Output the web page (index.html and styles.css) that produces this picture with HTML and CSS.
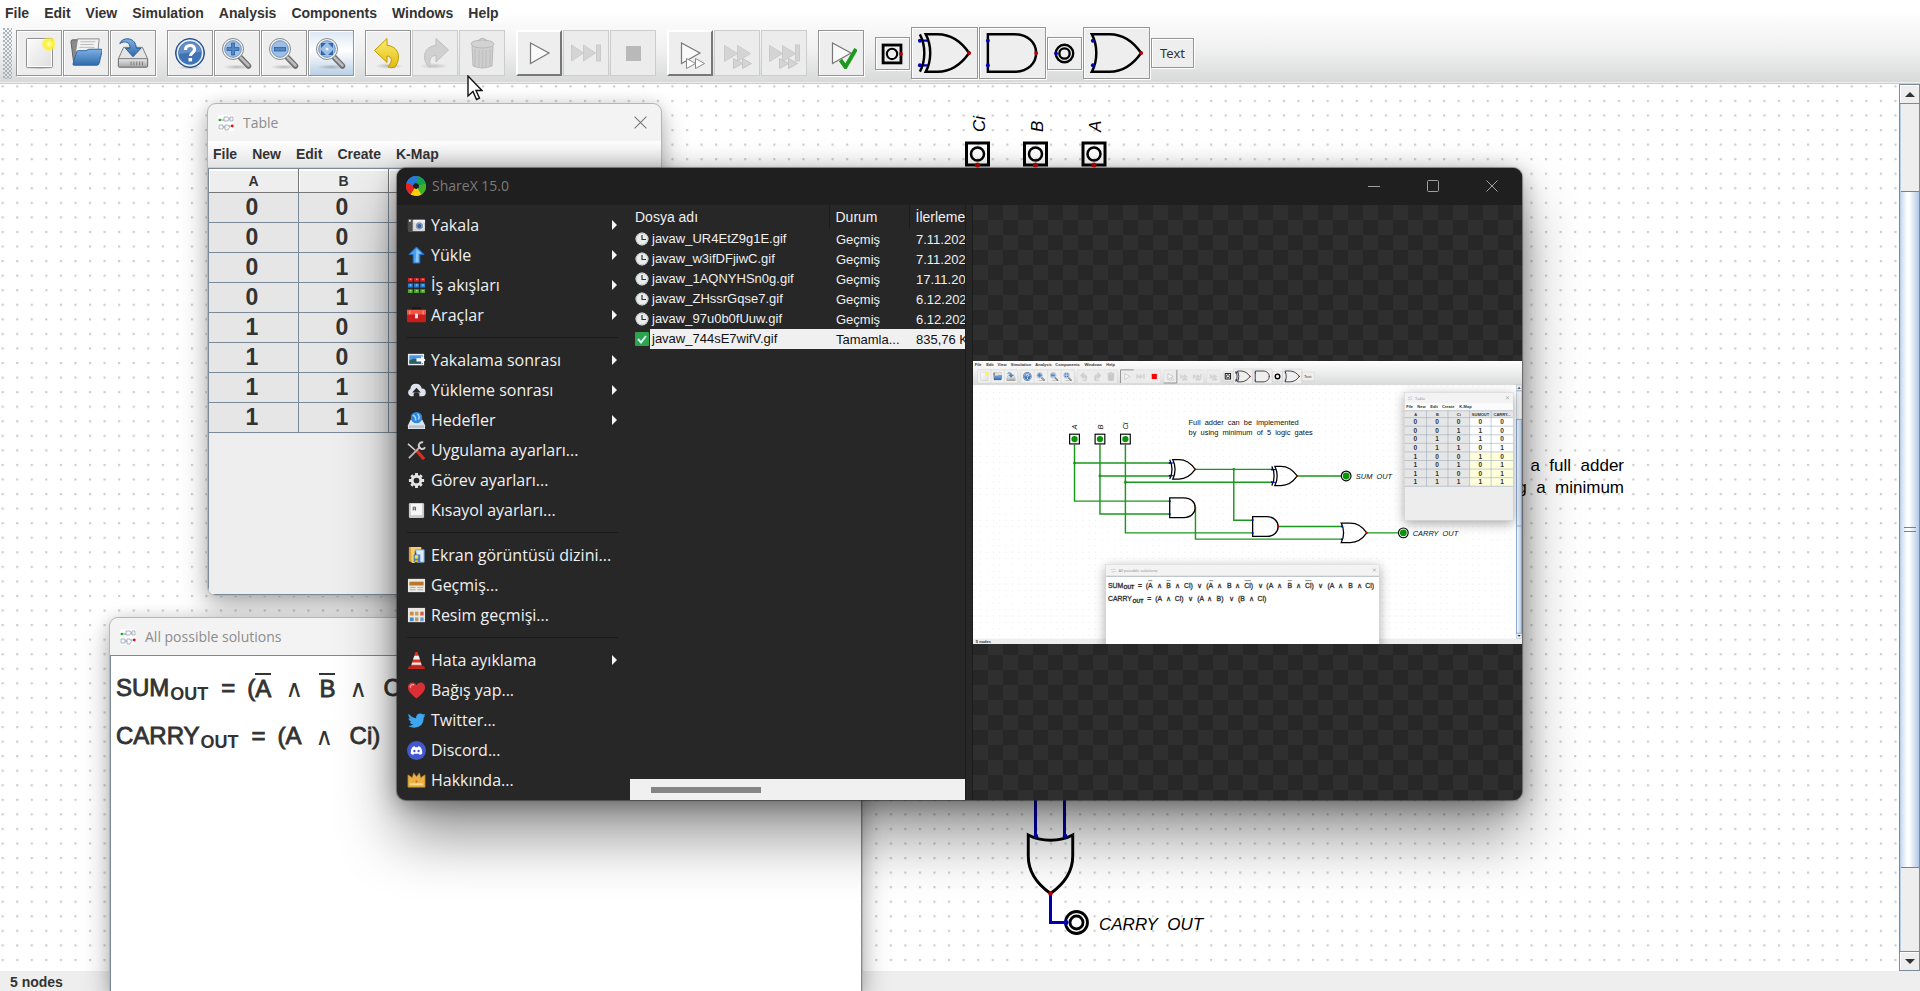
FILE: index.html
```
<!DOCTYPE html>
<html lang="tr">
<head>
<meta charset="utf-8">
<title>Digital</title>
<link rel="stylesheet" href="styles.css">
</head>
<body>
<svg class="sprite" width="0" height="0" aria-hidden="true">
  <defs>
    <linearGradient id="g-blue" x1="0" y1="0" x2="0" y2="1"><stop offset="0" stop-color="#7fb0e2"/><stop offset="1" stop-color="#2f69ad"/></linearGradient>
    <linearGradient id="g-paper" x1="0" y1="0" x2="1" y2="1"><stop offset="0" stop-color="#fdfdfd"/><stop offset="1" stop-color="#dedede"/></linearGradient>
    <linearGradient id="g-metal" x1="0" y1="0" x2="0" y2="1"><stop offset="0" stop-color="#e8e8e8"/><stop offset="1" stop-color="#a5a5a5"/></linearGradient>
    <linearGradient id="g-gold" x1="0" y1="0" x2="0" y2="1"><stop offset="0" stop-color="#fbee6e"/><stop offset="1" stop-color="#e2bb10"/></linearGradient>
    <radialGradient id="g-star"><stop offset="0" stop-color="#ffffc0"/><stop offset=".55" stop-color="#fdf02c"/><stop offset="1" stop-color="#fdf02c" stop-opacity="0"/></radialGradient>
    <radialGradient id="g-shade"><stop offset="0" stop-color="#000" stop-opacity=".22"/><stop offset="1" stop-color="#000" stop-opacity="0"/></radialGradient>
    <linearGradient id="g-bar" x1="0" y1="0" x2="0" y2="1"><stop offset="0" stop-color="#fff"/><stop offset="1" stop-color="#d9dada"/></linearGradient>
    <linearGradient id="g-thumb" x1="0" y1="0" x2="1" y2="0"><stop offset="0" stop-color="#fff"/><stop offset="1" stop-color="#a9c5e4"/></linearGradient>
    <pattern id="dots" width="20" height="20" patternUnits="userSpaceOnUse" x="2.2" y="1.8"><rect width="3" height="3" fill="#cdcdcd"/></pattern>

    <symbol id="i-new" viewBox="0 0 32 32"><ellipse cx="16" cy="31" rx="15" ry="2" fill="url(#g-shade)"/><rect x="3.5" y="1.5" width="26" height="29" rx="1" fill="url(#g-paper)" stroke="#8f8f8f"/><rect x="4.5" y="2.5" width="24" height="27" fill="none" stroke="#fff"/><circle cx="26" cy="7" r="8" fill="url(#g-star)"/></symbol>
    <symbol id="i-open" viewBox="0 0 34 32"><path d="M1 4 q0-2 2-2 h6 l2 3 h17 v22 H4z" fill="#8b8b88" stroke="#5c5c5c"/><path d="M8 1 h23 l-2 20 H5z" fill="#f2f2f2" stroke="#868686"/><path d="M11 4h16M11 7h14M10 10h16" stroke="#b9b9b9"/><path d="M7 15 q0-1.500 2-1.500 h8 l3-1.500 h13 q1.500 0 1.200 1.500 L31 27 q-.5 2-2.500 2 H4 q-1 0-.8-1.500z" fill="url(#g-blue)" stroke="#2b62a4"/></symbol>
    <symbol id="i-save" viewBox="0 0 34 32"><path d="M7 10 h20 l5.500 12 v8 q0 1-1 1 H2.500 q-1 0-1-1 v-8z" fill="#e4e4e2" stroke="#747474"/><path d="M1.500 22 h31 v8 q0 1-1 1 H2.500 q-1 0-1-1z" fill="url(#g-metal)" stroke="#747474"/><path d="M15 25v4M18 25v4M21 25v4M24 25v4M27 25v4" stroke="#777"/><path d="M3 6 C5-1 20-2 20.500 11 h5 L17 20 9 11 h5 C14 5 9 2 3 6z" fill="url(#g-blue)" stroke="#23578f"/></symbol>
    <symbol id="i-help" viewBox="0 0 32 32"><ellipse cx="16" cy="30.500" rx="13" ry="2" fill="url(#g-shade)"/><circle cx="16" cy="16" r="14.500" fill="#3465a4" stroke="#204a87"/><circle cx="16" cy="16" r="12.600" fill="#3f73b5" stroke="#e7eef7" stroke-width="1.600"/><path d="M5 17a11 11 0 0 1 22-2q-11 0-22 2z" fill="#fff" opacity=".2"/><path d="M11.500 13 q0-4.500 4.500-4.500 t4.500 4 q0 2-2.200 3.500 -1.800 1.200-1.800 3" fill="none" stroke="#fff" stroke-width="3.200"/><rect x="14.500" y="21" width="3.600" height="3.400" fill="#fff"/></symbol>
    <g id="lens"><ellipse cx="16" cy="30" rx="14" ry="2.500" fill="url(#g-shade)"/><path d="M18.500 19.500l9 9.500" stroke="#6e6e6e" stroke-width="5.500" stroke-linecap="round"/><path d="M19.500 20.500l8 8" stroke="#bdbdbd" stroke-width="2.500" stroke-linecap="round"/><circle cx="12" cy="12" r="10.500" fill="#f4f4f2" stroke="#8a8c88"/><circle cx="12" cy="12" r="8.300" fill="#9dbfe6" stroke="#6f95c3"/></g>
    <symbol id="i-zin" viewBox="0 0 32 32"><use href="#lens"/><path d="M10.500 6h3v4.500H18v3h-4.500V18h-3v-4.500H6v-3h4.500z" fill="#5285c2" stroke="#2f5f9f" stroke-width=".8"/></symbol>
    <symbol id="i-zout" viewBox="0 0 32 32"><use href="#lens"/><rect x="6.500" y="10.500" width="11" height="3.500" fill="#5285c2" stroke="#2f5f9f" stroke-width=".8"/></symbol>
    <symbol id="i-zfit" viewBox="0 0 32 32"><use href="#lens"/><path d="M6 11V6h5zM18 11V6h-5zM6 13v5h5zM18 13v5h-5z" fill="#2f66ac"/><circle cx="12" cy="12" r="1.500" fill="#eef4fb"/></symbol>
    <symbol id="i-undo" viewBox="0 0 32 32"><ellipse cx="17" cy="29" rx="14" ry="3" fill="url(#g-shade)"/><path d="M2.500 13.500 L15 1.500 v7 C26 9 30 20 23 30 q-3 1.500-7 0 C21 24 20 19.500 15 19 v6.500z" fill="url(#g-gold)" stroke="#bd9805"/></symbol>
    <symbol id="i-redo" viewBox="0 0 32 32"><ellipse cx="15" cy="29" rx="14" ry="3" fill="url(#g-shade)"/><path d="M29.500 13 L17 1.500 v7 C6 9 2 20 9 29 q1 1 3 1 C9 24 12 18 17 18.500 V25z" fill="#c8cac8" stroke="#b4b4b4"/></symbol>
    <symbol id="i-trash" viewBox="0 0 32 32"><path d="M6 9h21l-1 20q-9.500 4-19 0z" fill="#c8c8c8" stroke="#adadad"/><path d="M9 12v17M13 13v17M16.500 13v18M20 13v17M24 12v17" stroke="#b8b8b8" stroke-width="1.500"/><ellipse cx="16.500" cy="7" rx="11.500" ry="4" fill="#cdcdcd" stroke="#adadad"/><path d="M12.500 4q4-5 8 0" fill="none" stroke="#adadad" stroke-width="1.500"/></symbol>
    <symbol id="i-play" viewBox="0 0 32 32"><path d="M7.500 6v20.500L26 16z" fill="#fafafa" stroke="#777" stroke-width="1.200"/></symbol>
    <symbol id="i-ff" viewBox="0 0 32 32"><path d="M1.500 8v16l12-8zM13.500 8v16l12-8z" fill="#cfcfcf" stroke="#c2c2c2"/><rect x="26.500" y="8" width="4" height="16" fill="#cfcfcf" stroke="#c2c2c2"/></symbol>
    <symbol id="i-stop" viewBox="0 0 32 32"><rect x="9" y="9" width="15" height="15" fill="#adadad"/></symbol>
    <symbol id="i-step" viewBox="0 0 32 32"><path d="M7.500 6v20.500L26 16z" fill="#fafafa" stroke="#777" stroke-width="1.200"/><path d="M12.500 21.500v10l9-5zM21.500 21.500v10l9-5z" fill="#fff" stroke="#888"/></symbol>
    <symbol id="i-fast" viewBox="0 0 32 32"><path d="M3.500 8.500v16l13-8zM16.500 8.500v16l13-8z" fill="#cfcfcf" stroke="#c2c2c2"/><path d="M12.500 21.500v10l9-5zM21.500 21.500v10l9-5z" fill="#cfcfcf" stroke="#bbb"/></symbol>
    <symbol id="i-faste" viewBox="0 0 32 32"><path d="M1.500 8.500v16l13-8zM14.500 8.500v16l13-8z" fill="#cfcfcf" stroke="#c2c2c2"/><rect x="27.500" y="8" width="4" height="16" fill="#cfcfcf" stroke="#c2c2c2"/><path d="M11.500 21.500v10l9-5zM20.500 21.500v10l9-5z" fill="#cfcfcf" stroke="#bbb"/></symbol>
    <symbol id="i-check" viewBox="0 0 32 32"><path d="M7.500 6v20.500L26 16z" fill="#fafafa" stroke="#777" stroke-width="1.200"/><path d="M15.500 23l5 7L31 12" fill="none" stroke="#1d9a1d" stroke-width="4"/></symbol>

    <g id="c-and"><path d="M0-19H27C41-19 49-10 49 0S41 19 27 19H0Z" fill="none" stroke="#000" stroke-width="2.500"/><circle cy="-12.500" r="2" fill="#00b"/><circle cy="12.500" r="2" fill="#00b"/><circle cx="49" r="2" fill="#b00"/></g>
    <g id="c-or"><path d="M0-19H18C32-19 43-10 50 0C43 10 32 19 18 19H0C6 8 6-8 0-19Z" fill="none" stroke="#000" stroke-width="2.500"/><circle cx="1" cy="-12.500" r="2" fill="#00b"/><circle cx="1" cy="12.500" r="2" fill="#00b"/><circle cx="50" r="2" fill="#b00"/></g>
    <g id="c-xor"><path d="M0-12.500H8M0 12.500H8" stroke="#00b" stroke-width="2.200"/><path d="M6-19H18C32-19 43-10 50 0C43 10 32 19 18 19H6C12 8 12-8 6-19ZM0-19C6-8 6 8 0 19" fill="none" stroke="#000" stroke-width="2.500"/><circle cy="-12.500" r="2" fill="#00b"/><circle cy="12.500" r="2" fill="#00b"/><circle cx="50" r="2" fill="#b00"/></g>

    <symbol id="i-digital" viewBox="0 0 16 16"><rect width="16" height="16" fill="#fff"/><path d="M6 2h4q2 1.500 0 4H6zM12 2h3v4h-3zM1 10h4v4H1zM7 10h3q3 2 0 5H7z" fill="#f6f8fc" stroke="#a4aab8" stroke-width=".9"/><path d="M2 5h4M12 4h-1M5 12h2M11 11h3" stroke="#8a96b4"/><circle cx="1.800" cy="5" r="1.300" fill="#12b012"/><circle cx="14.300" cy="11" r="1.400" fill="#e01010"/></symbol>
    <symbol id="i-close" viewBox="0 0 12 12"><path d="M.5.5l11 11M11.500.5l-11 11" stroke="currentColor" fill="none"/></symbol>

    <symbol id="s-logo" viewBox="0 0 20 20"><circle cx="10" cy="10" r="6.500" fill="none" stroke="#2f8fe8" stroke-width="7"/><g fill="none" stroke-width="7"><path d="M10 3.500a6.500 6.500 0 0 1 6.500 6.500" stroke="#13a24b"/><path d="M16.500 8.500a6.500 6.500 0 0 1-5.500 8" stroke="#43b02a"/><path d="M13.500 15.500a6.500 6.500 0 0 1-8-1" stroke="#fdd00c"/><path d="M6.500 15.500a6.500 6.500 0 0 1-2.800-7.500" stroke="#e9231b"/><path d="M3.800 8A6.500 6.500 0 0 1 11 3.600" stroke="#2977d6"/></g></symbol>
    <symbol id="s-camera" viewBox="0 0 20 20"><rect x="1" y="4" width="18" height="12" rx="1" fill="#d3d3d3"/><rect x="1" y="3" width="5" height="13" fill="#4b4b4b"/><rect x="2" y="4" width="2" height="2" fill="#eee"/><rect x="7" y="4" width="12" height="3" fill="#f0f0f0"/><circle cx="13" cy="10.500" r="4.500" fill="#8a98b0" stroke="#f4f4f4"/><circle cx="13" cy="10.500" r="2" fill="#2f5fa8"/></symbol>
    <symbol id="s-up" viewBox="0 0 20 20"><path d="M10 1l8 8h-4.500v9h-7V9H2z" fill="#4aa0ee" stroke="#1f6fc4"/><path d="M10 3l5 5h-3v9H9z" fill="#8cc7fa"/></symbol>
    <symbol id="s-grid" viewBox="0 0 20 20"><path d="M1 2h5v4H1zM7.500 2h5v4h-5zM14 2h5v4h-5z" fill="#d3242b"/><path d="M1 8h5v4H1zM7.500 8h5v4h-5zM14 8h5v4h-5z" fill="#2a82d8"/><path d="M1 14h5v4H1zM7.500 14h5v4h-5zM14 14h5v4h-5z" fill="#4faa28"/><path d="M3 3.500h1.500M9.500 3.500H11M16 3.500h1.500M3 9.500h1.500M9.500 9.500H11M16 9.500h1.500M3 15.500h1.500M9.500 15.500H11M16 15.500h1.500" stroke="#fff" opacity=".8"/></symbol>
    <symbol id="s-box" viewBox="0 0 20 20"><path d="M6 5V2.500h8V5" fill="none" stroke="#151515" stroke-width="2"/><rect x="0" y="4" width="20" height="13" rx="1" fill="#c91c1c"/><rect x="0" y="4" width="20" height="5" fill="#ef5545"/><path d="M3 5v4M17 5v4" stroke="#f7a79c"/><rect x="8.500" y="8" width="3" height="5" fill="#e8e8e8"/></symbol>
    <symbol id="s-after" viewBox="0 0 20 20"><rect x="1" y="3" width="17" height="12" fill="#e9eef4"/><rect x="2.500" y="4.500" width="14" height="9" fill="#4c95e0"/><path d="M2.500 10l5-2 9 3v2.500h-14z" fill="#2f5d60"/><path d="M10 7.500h5V5l4.500 4.500L15 14v-3h-5z" fill="#fff"/></symbol>
    <symbol id="s-cloud" viewBox="0 0 20 20"><path d="M4 16a4 4 0 0 1-.5-7.500Q4 3 9.500 3q5 0 6 5A4 4 0 0 1 16 16h-3v-3H7v3z" fill="#dfe3ee"/><path d="M10 7l4.500 5H5.500z" fill="#272727"/><path d="M10 18v-6" stroke="#272727" stroke-width="4"/></symbol>
    <symbol id="s-target" viewBox="0 0 20 20"><path d="M4 9h12l3 6v4H1v-4z" fill="#e2e6ea"/><path d="M2 15h16v3H2z" fill="#b6c4d2"/><circle cx="10" cy="7" r="6" fill="#3088dc"/><path d="M6 4q4 2 3 6M11 3q3 3 1 6" stroke="#a5d8ff" fill="none" stroke-width="1.500"/></symbol>
    <symbol id="s-tools" viewBox="0 0 20 20"><path d="M1 3l8 7" stroke="#d8d8d8" stroke-width="1.500"/><path d="M10 10l7 8" stroke="#d62e22" stroke-width="3.500" stroke-linecap="round"/><path d="M2 18L14 6" stroke="#b9b9b9" stroke-width="2"/><path d="M17 1.500a3.500 3.500 0 1 0 2 5" fill="none" stroke="#cfcfcf" stroke-width="2"/></symbol>
    <symbol id="s-gear" viewBox="0 0 20 20"><circle cx="10" cy="10" r="4.500" fill="none" stroke="#e4e4e4" stroke-width="3"/><g stroke="#e4e4e4" stroke-width="3"><path d="M10 2v3M10 15v3M2 10h3M15 10h3M4.500 4.500l2 2M13.500 13.500l2 2M15.500 4.500l-2 2M6.500 13.500l-2 2"/></g></symbol>
    <symbol id="s-key" viewBox="0 0 20 20"><rect x="2" y="2" width="16" height="16" rx="1.500" fill="#c9c9c9"/><rect x="4" y="3" width="12" height="12" fill="#f6f6f6"/><path d="M6.500 10V6.500h2.500V10M6.500 8.500H9" stroke="#555" fill="none"/></symbol>
    <symbol id="s-folder" viewBox="0 0 20 20"><path d="M2 1h6v17l-6-2z" fill="#d9a43c"/><path d="M4 1h11v4H8v13H5z" fill="#f3cf74"/><path d="M9 4h9v13h-7z" fill="#dcebfa" stroke="#6f9fd0"/><rect x="7" y="9" width="7" height="8" fill="#4a83c9"/><circle cx="10" cy="11.500" r="2" fill="#f6de3a"/><path d="M8 17q2-5 4 0z" fill="#e8b820"/></symbol>
    <symbol id="s-history" viewBox="0 0 20 20"><rect x="1" y="3" width="18" height="14" fill="#eceae4"/><rect x="2.500" y="6" width="15" height="4" fill="#b9762c"/><path d="M3 12h6M3 14.500h6M11 12h6M11 14.500h6" stroke="#aaa"/></symbol>
    <symbol id="s-images" viewBox="0 0 20 20"><rect x="1" y="2" width="18" height="15" fill="#e9e7e1"/><path d="M3 6h4v4H3z" fill="#d08a4a"/><path d="M8.500 6h3.500v4H8.500z" fill="#c99a50"/><path d="M14 6h3.500v4H14z" fill="#d25a4a"/><path d="M3 12h4v4H3z" fill="#4a8ac0"/><path d="M8.500 12h3.500v4H8.500z" fill="#b09a70"/><path d="M14 12h3.500v4H14z" fill="#6a9ad0"/></symbol>
    <symbol id="s-cone" viewBox="0 0 20 20"><path d="M9 1h2l5 15H4z" fill="#e23222"/><path d="M7.800 5h4.500l1.300 4H6.300z" fill="#f1f1f1"/><path d="M5.500 12h9l.8 2.500H4.700z" fill="#f1f1f1"/><path d="M2 16h16l1 3H1z" fill="#c7221b"/></symbol>
    <symbol id="s-heart" viewBox="0 0 20 20"><path d="M10 18.500C2 12 1 9 1 6.500 1 1 8 0 10 4.500 12 0 19 1 19 6.500c0 2.500-1 5.500-9 12z" fill="#dc2f35"/><path d="M3.500 7q0-4 4-3" stroke="#f79a9a" fill="none" stroke-width="1.500"/></symbol>
    <symbol id="s-bird" viewBox="0 0 20 20"><path d="M1.500 3q4 4.500 8 4.500Q9.500 2.500 14 2.500q2 0 3 1.200l2-.7-1 2 1.500-.3-1.800 2Q17.500 17 8 17.500q-4 0-6.500-1.700 3 0 5-1.500-3-.4-3.500-2.800h1.500Q1.500 10 1.500 7.500l1.600.4Q.8 6 1.500 3z" fill="#3ea6ee"/></symbol>
    <symbol id="s-discord" viewBox="0 0 20 20"><circle cx="10" cy="10" r="10" fill="#4357cf"/><path d="M4 13.500q-.3-5 2.200-7.500l2-.5.5 1h2.600l.5-1 2 .5q2.500 2.500 2.200 7.500l-2.500 1.300-.8-1.500H7.300l-.8 1.500z" fill="#fff"/><ellipse cx="7.800" cy="10.500" rx="1.200" ry="1.400" fill="#4357cf"/><ellipse cx="12.200" cy="10.500" rx="1.200" ry="1.400" fill="#4357cf"/></symbol>
    <symbol id="s-crown" viewBox="0 0 20 20"><path d="M1 4l4.500 3L7 2l3 4 3-4 1.500 5L19 4v13H1z" fill="#e8b14a" stroke="#b77f20" stroke-width=".8"/><path d="M3 14h14" stroke="#f7d98a" stroke-width="2"/><circle cx="10" cy="11" r="1" fill="#d0502a"/></symbol>
    <symbol id="s-clock" viewBox="0 0 14 14"><circle cx="7" cy="7" r="6.500" fill="#e9eded"/><circle cx="7" cy="7" r="5.800" fill="none" stroke="#c3c9cb"/><path d="M7 3v4.500h4" stroke="#333" fill="none" stroke-width="1.200"/></symbol>
    <symbol id="s-done" viewBox="0 0 14 14"><rect width="14" height="14" rx="1" fill="#2fa34c"/><path d="M3 7l3 3.500L11 4" fill="none" stroke="#d4efff" stroke-width="2"/></symbol>
  </defs>
</svg>

<header class="app-head">
  <nav class="menubar" aria-label="Main menu">
    <button>File</button><button>Edit</button><button>View</button><button>Simulation</button><button>Analysis</button><button>Components</button><button>Windows</button><button>Help</button>
  </nav>
  <div class="toolbar" role="toolbar">
    <span class="grip"></span>
    <div class="tools">
      <button class="tool" aria-label="New"><svg><use href="#i-new"/></svg></button>
      <button class="tool" aria-label="Open"><svg><use href="#i-open"/></svg></button>
      <button class="tool" aria-label="Save"><svg><use href="#i-save"/></svg></button>
    </div>
    <div class="tools">
      <button class="tool" aria-label="Help"><svg><use href="#i-help"/></svg></button>
      <button class="tool" aria-label="Zoom in"><svg><use href="#i-zin"/></svg></button>
      <button class="tool" aria-label="Zoom out"><svg><use href="#i-zout"/></svg></button>
      <button class="tool hover" aria-label="Fit"><svg><use href="#i-zfit"/></svg></button>
    </div>
    <div class="tools">
      <button class="tool" aria-label="Undo"><svg><use href="#i-undo"/></svg></button>
      <button class="tool off" disabled aria-label="Redo"><svg><use href="#i-redo"/></svg></button>
      <button class="tool off" disabled aria-label="Delete"><svg><use href="#i-trash"/></svg></button>
    </div>
    <div class="tools">
      <button class="tool raised" aria-label="Start"><svg><use href="#i-play"/></svg></button>
      <button class="tool off" disabled aria-label="Step"><svg><use href="#i-ff"/></svg></button>
      <button class="tool off" disabled aria-label="Stop"><svg><use href="#i-stop"/></svg></button>
    </div>
    <div class="tools">
      <button class="tool raised" aria-label="Start steps"><svg><use href="#i-step"/></svg></button>
      <button class="tool off" disabled aria-label="Fast run"><svg><use href="#i-fast"/></svg></button>
      <button class="tool off" disabled aria-label="Run to break"><svg><use href="#i-faste"/></svg></button>
    </div>
    <div class="tools">
      <button class="tool" aria-label="Run tests"><svg><use href="#i-check"/></svg></button>
    </div>
    <div class="tools">
      <button class="part pin" aria-label="Input"><svg viewBox="0 0 34 33"><rect x="7" y="7.500" width="19" height="19" fill="none" stroke="#000" stroke-width="3"/><circle cx="16.500" cy="17" r="5.500" fill="none" stroke="#000" stroke-width="2.200"/><circle cx="26" cy="17" r="2" fill="#b00"/></svg></button>
      <button class="part gate" aria-label="XOr"><svg viewBox="0 0 66 50"><use href="#c-xor" x="8" y="25"/></svg></button>
      <button class="part gate" aria-label="And"><svg viewBox="0 0 66 50"><use href="#c-and" x="8" y="25"/></svg></button>
      <button class="part pin" aria-label="Output"><svg viewBox="0 0 34 33"><circle cx="17" cy="16.500" r="9.300" fill="none" stroke="#000" stroke-width="2.500"/><circle cx="17" cy="16.500" r="5.500" fill="none" stroke="#000" stroke-width="2.500"/><circle cx="8" cy="16.500" r="2" fill="#00b"/></svg></button>
      <button class="part gate" aria-label="Or"><svg viewBox="0 0 66 50"><use href="#c-or" x="8" y="25"/></svg></button>
      <button class="part text">Text</button>
    </div>
  </div>
</header>

<main class="work">
  <svg class="circuit">
    <g transform="scale(.728)"><rect width="3000" height="2000" fill="url(#dots)"/></g>
    <g transform="translate(0 -84)">
      <g class="label">
        <text transform="translate(985 132) rotate(-90)">Ci</text>
        <text transform="translate(1043 132) rotate(-90)">B</text>
        <text transform="translate(1101 132) rotate(-90)">A</text>
        <text x="1099" y="930">CARRY&nbsp; OUT</text>
      </g>
      <g fill="none" stroke="#000" stroke-width="3">
        <rect x="966.500" y="143" width="22" height="22"/><circle cx="977.500" cy="154" r="6.500" stroke-width="2.500"/>
        <rect x="1024.500" y="143" width="22" height="22"/><circle cx="1035.500" cy="154" r="6.500" stroke-width="2.500"/>
        <rect x="1083" y="143" width="22" height="22"/><circle cx="1094" cy="154" r="6.500" stroke-width="2.500"/>
      </g>
      <g fill="#b00"><circle cx="977.500" cy="165" r="2.500"/><circle cx="1035.500" cy="165" r="2.500"/><circle cx="1094" cy="165" r="2.500"/></g>
      <path d="M1035.500 790V837M1064.500 790V837M1050.500 893V922.500H1066" fill="none" stroke="#00a" stroke-width="3"/>
      <use href="#c-or" transform="translate(1050.500 835) rotate(90) scale(1.170)"/>
      <circle cx="1076.500" cy="922.500" r="11" fill="none" stroke="#000" stroke-width="2.800"/><circle cx="1076.500" cy="922.500" r="6.500" fill="none" stroke="#000" stroke-width="2.800"/><circle cx="1066" cy="922.500" r="2.500" fill="#00b"/>
      <g class="note"><text x="1624" y="471">implementing&nbsp; a&nbsp; full&nbsp; adder</text><text x="1624" y="493">using&nbsp; a&nbsp; minimum</text></g>
    </g>
  </svg>
  <div class="vscroll">
    <button aria-label="Scroll up"><svg viewBox="0 0 10 5"><path d="M0 5L5 0l5 5z"/></svg></button>
    <div class="track"><div class="thumb"><i></i></div></div>
    <button aria-label="Scroll down"><svg viewBox="0 0 10 5"><path d="M0 0l5 5 5-5z"/></svg></button>
  </div>
</main>
<footer class="status">5 nodes</footer>

<section class="window table-win">
  <div class="caption"><svg><use href="#i-digital"/></svg><span>Table</span><button aria-label="Close"><svg><use href="#i-close"/></svg></button></div>
  <nav class="menubar small"><button>File</button><button>New</button><button>Edit</button><button>Create</button><button>K-Map</button></nav>
  <div class="truth-box">
    <table class="truth">
      <thead><tr><th>A</th><th>B</th><th></th></tr></thead>
      <tbody>
        <tr><td>0</td><td>0</td><td></td></tr>
        <tr><td>0</td><td>0</td><td></td></tr>
        <tr><td>0</td><td>1</td><td></td></tr>
        <tr><td>0</td><td>1</td><td></td></tr>
        <tr><td>1</td><td>0</td><td></td></tr>
        <tr><td>1</td><td>0</td><td></td></tr>
        <tr><td>1</td><td>1</td><td></td></tr>
        <tr><td>1</td><td>1</td><td></td></tr>
      </tbody>
    </table>
  </div>
</section>

<section class="window solutions">
  <div class="caption"><svg><use href="#i-digital"/></svg><span>All possible solutions</span></div>
  <div class="formulas">
    <p>SUM<sub>OUT</sub><b>=</b>(<i>A</i><em>∧</em><i>B</i><em>∧</em>Ci)</p>
    <p>CARRY<sub>OUT</sub><b>=</b>(A<em>∧</em>Ci)</p>
  </div>
</section>

<section class="sharex">
  <div class="titlebar">
    <svg class="logo"><use href="#s-logo"/></svg><h1>ShareX 15.0</h1>
    <button aria-label="Minimize"><svg viewBox="0 0 12 12"><path d="M0 6.500h12"/></svg></button>
    <button aria-label="Maximize"><svg viewBox="0 0 12 12"><rect x=".5" y=".5" width="11" height="11" rx="1"/></svg></button>
    <button aria-label="Close"><svg viewBox="0 0 12 12"><path d="M.5.5l11 11M11.500.5l-11 11"/></svg></button>
  </div>
  <div class="panes">
    <nav class="side">
      <button class="more"><svg><use href="#s-camera"/></svg>Yakala</button>
      <button class="more"><svg><use href="#s-up"/></svg>Yükle</button>
      <button class="more"><svg><use href="#s-grid"/></svg>İş akışları</button>
      <button class="more"><svg><use href="#s-box"/></svg>Araçlar</button>
      <hr>
      <button class="more"><svg><use href="#s-after"/></svg>Yakalama sonrası</button>
      <button class="more"><svg><use href="#s-cloud"/></svg>Yükleme sonrası</button>
      <button class="more"><svg><use href="#s-target"/></svg>Hedefler</button>
      <button><svg><use href="#s-tools"/></svg>Uygulama ayarları...</button>
      <button><svg><use href="#s-gear"/></svg>Görev ayarları...</button>
      <button><svg><use href="#s-key"/></svg>Kısayol ayarları...</button>
      <hr>
      <button><svg><use href="#s-folder"/></svg>Ekran görüntüsü dizini...</button>
      <button><svg><use href="#s-history"/></svg>Geçmiş...</button>
      <button><svg><use href="#s-images"/></svg>Resim geçmişi...</button>
      <hr>
      <button class="more"><svg><use href="#s-cone"/></svg>Hata ayıklama</button>
      <button><svg><use href="#s-heart"/></svg>Bağış yap...</button>
      <button><svg><use href="#s-bird"/></svg>Twitter...</button>
      <button><svg><use href="#s-discord"/></svg>Discord...</button>
      <button><svg><use href="#s-crown"/></svg>Hakkında...</button>
    </nav>
    <div class="list">
      <div class="list-view">
      <table class="tasks">
        <thead><tr><th>Dosya adı</th><th>Durum</th><th>İlerleme</th></tr></thead>
        <tbody>
          <tr><td><svg><use href="#s-clock"/></svg><span>javaw_UR4EtZ9g1E.gif</span></td><td>Geçmiş</td><td>7.11.2022</td></tr>
          <tr><td><svg><use href="#s-clock"/></svg><span>javaw_w3ifDFjiwC.gif</span></td><td>Geçmiş</td><td>7.11.2022</td></tr>
          <tr><td><svg><use href="#s-clock"/></svg><span>javaw_1AQNYHSn0g.gif</span></td><td>Geçmiş</td><td>17.11.2022</td></tr>
          <tr><td><svg><use href="#s-clock"/></svg><span>javaw_ZHssrGqse7.gif</span></td><td>Geçmiş</td><td>6.12.2022</td></tr>
          <tr><td><svg><use href="#s-clock"/></svg><span>javaw_97u0b0fUuw.gif</span></td><td>Geçmiş</td><td>6.12.2022</td></tr>
          <tr class="sel"><td><svg><use href="#s-done"/></svg><span>javaw_744sE7wifV.gif</span></td><td>Tamamla...</td><td>835,76 KiB</td></tr>
        </tbody>
      </table>
      </div>
      <div class="hscroll"><div class="hthumb"></div></div>
    </div>
    <div class="splitter"></div>
    <div class="preview">
      <svg class="shot" viewBox="0 0 1920 991">
        <rect width="1920" height="991" fill="#fff"/>
        <rect width="1920" height="84" fill="url(#g-bar)"/>
        <g class="mb"><text x="6" y="18">File</text><text x="46" y="18">Edit</text><text x="86" y="18">View</text><text x="132" y="18">Simulation</text><text x="218" y="18">Analysis</text><text x="288" y="18">Components</text><text x="390" y="18">Windows</text><text x="466" y="18">Help</text></g>
        <path d="M16 31h140v46H16zM167 31h187v46H167zM63 31v46M110 31v46M214 31v46M261 31v46M308 31v46" fill="#f0f0f0" stroke="#bbb"/>
        <path d="M365 31h140v46H365zM516 31h140v46H516zM667 31h140v46H667zM818 31h46v46H818z" fill="#ececec" stroke="#d4d4d4"/>
        <path d="M516 77V31h46M667 77h46V31" stroke="#888" stroke-width="3" fill="none"/>
        <use href="#i-new" x="23" y="38" width="32" height="32"/><use href="#i-open" x="70" y="38" width="32" height="32"/><use href="#i-save" x="117" y="38" width="32" height="32"/>
        <use href="#i-help" x="174" y="38" width="32" height="32"/><use href="#i-zin" x="221" y="38" width="32" height="32"/><use href="#i-zout" x="268" y="38" width="32" height="32"/><use href="#i-zfit" x="315" y="38" width="32" height="32"/>
        <g opacity=".8"><g transform="translate(404 38) scale(-1 1)"><use href="#i-redo" width="32" height="32"/></g><use href="#i-redo" x="419" y="38" width="32" height="32"/><use href="#i-trash" x="466" y="38" width="32" height="32"/><use href="#i-play" x="523" y="38" width="32" height="32"/><use href="#i-ff" x="570" y="38" width="32" height="32"/><use href="#i-step" x="674" y="38" width="32" height="32"/><use href="#i-fast" x="721" y="38" width="32" height="32"/><use href="#i-faste" x="768" y="38" width="32" height="32"/><use href="#i-fast" x="825" y="38" width="32" height="32"/></g>
        <rect x="625" y="45" width="18" height="18" fill="#f00"/>
        <path d="M875 37h35v33h-35zM911 28h67v52h-67zM979 28h67v52h-67zM1047 37h35v33h-35zM1083 28h67v52h-67zM1151 39h43v30h-43z" fill="#efefef" stroke="#bbb"/>
        <rect x="882" y="44" width="19" height="19" fill="none" stroke="#000" stroke-width="3"/><circle cx="891.500" cy="53.500" r="5.500" fill="none" stroke="#000" stroke-width="2.500"/>
        <use href="#c-xor" x="919" y="54"/><use href="#c-and" x="987" y="54"/><circle cx="1065" cy="54" r="8" fill="none" stroke="#000" stroke-width="5"/><use href="#c-or" x="1091" y="54"/>
        <text x="1158" y="59" font-size="14" fill="#333">Text</text>
        <g transform="translate(0 84) scale(1.117)"><rect width="1700" height="794" fill="url(#dots)" opacity=".45"/></g>
        <rect y="971" width="1920" height="20" fill="#eee"/><text class="b14" x="10" y="987">5 nodes</text>
        <rect x="1901" y="84" width="18" height="887" fill="#eee" stroke="#a9bdd2" stroke-width="2"/><rect x="1901" y="204" width="18" height="748" fill="url(#g-thumb)" stroke="#7f9fcb" stroke-width="3"/><path d="M1901 104h18M1901 577h18" stroke="#7f9fcb" stroke-width="3"/><path d="M1904 97l6-6 6 6zM1904 958l6 6 6-6z" fill="#333"/>

        <g fill="none" stroke="#18981c" stroke-width="5"><path d="M355 292V490H688M355 357H688M444 292V535H688M444 402H688M533 292V601H978M533 424H1045M778 379H1045M912 379V557H978M1134 402H1288M778 513V623H1288M1067 579H1288M1376 601H1488"/></g>
        <g fill="#18981c"><circle cx="355" cy="357" r="5"/><circle cx="444" cy="402" r="5"/><circle cx="533" cy="424" r="5"/><circle cx="912" cy="379" r="5"/></g>
        <use href="#c-xor" transform="translate(688 379) scale(1.780)"/><use href="#c-xor" transform="translate(1045 402) scale(1.780)"/><use href="#c-and" transform="translate(688 513) scale(1.820)"/><use href="#c-and" transform="translate(978 579) scale(1.820)"/><use href="#c-or" transform="translate(1288 601) scale(1.780)"/>
        <g fill="#fff" stroke="#000" stroke-width="4"><rect x="338" y="256" width="34" height="34"/><rect x="427" y="256" width="34" height="34"/><rect x="516" y="256" width="34" height="34"/><circle cx="1305" cy="402" r="17"/><circle cx="1505" cy="601" r="17"/></g>
        <g fill="#099409"><circle cx="355" cy="273" r="11"/><circle cx="444" cy="273" r="11"/><circle cx="533" cy="273" r="11"/><circle cx="1305" cy="402" r="12"/><circle cx="1505" cy="601" r="12"/></g>
        <g class="big"><text class="it" transform="translate(365 240) rotate(-90)">A</text><text class="it" transform="translate(454 240) rotate(-90)">B</text><text class="it" transform="translate(543 240) rotate(-90)">Ci</text><text x="754" y="224">Full&nbsp; adder&nbsp; can&nbsp; be&nbsp; implemented</text><text x="754" y="258">by&nbsp; using&nbsp; minimum&nbsp; of&nbsp; 5&nbsp; logic&nbsp; gates</text><text class="it" x="1339" y="414">SUM&nbsp; OUT</text><text class="it" x="1538" y="613">CARRY&nbsp; OUT</text></g>

        <g class="pop"><rect x="1509" y="110" width="380" height="448" fill="#ededed" stroke="#b8b8b8"/></g>
        <rect x="1510" y="111" width="378" height="36" fill="#f3f3f3"/><rect x="1510" y="147" width="378" height="26" fill="#fbfbfb"/>
        <use href="#i-digital" x="1521" y="122" width="16" height="16"/><text x="1546" y="136" class="cap">Table</text><path d="M1864 123l11 11M1875 123l-11 11" stroke="#888" stroke-width="2"/>
        <g class="mb"><text x="1515" y="165">File</text><text x="1554" y="165">New</text><text x="1599" y="165">Edit</text><text x="1640" y="165">Create</text><text x="1701" y="165">K-Map</text></g>
        <rect x="1510" y="174" width="378" height="264" fill="#e6e6e6"/><rect x="1737" y="198" width="151" height="120" fill="#fff"/><rect x="1737" y="318" width="151" height="120" fill="#ffffdc"/>
        <path d="M1510 174H1888M1510 198H1888M1510 228H1888M1510 258H1888M1510 288H1888M1510 318H1888M1510 348H1888M1510 378H1888M1510 408H1888M1510 438H1888M1586 174V438M1661 174V438M1737 174V438M1812 174V438" stroke="#9aa9b8" stroke-width="2"/>
        <g class="b14 mid"><text x="1548" y="192">A</text><text x="1624" y="192">B</text><text x="1699" y="192">Ci</text><text x="1775" y="192">SUMOUT</text><text x="1850" y="192">CARRY...</text></g>
        <g class="num mid">
          <text y="221"><tspan x="1547">0</tspan><tspan x="1623">0</tspan><tspan x="1698">0</tspan><tspan x="1774">0</tspan><tspan x="1850">0</tspan></text>
          <text y="251"><tspan x="1547">0</tspan><tspan x="1623">0</tspan><tspan x="1698">1</tspan><tspan x="1774">1</tspan><tspan x="1850">0</tspan></text>
          <text y="281"><tspan x="1547">0</tspan><tspan x="1623">1</tspan><tspan x="1698">0</tspan><tspan x="1774">1</tspan><tspan x="1850">0</tspan></text>
          <text y="311"><tspan x="1547">0</tspan><tspan x="1623">1</tspan><tspan x="1698">1</tspan><tspan x="1774">0</tspan><tspan x="1850">1</tspan></text>
          <text y="341"><tspan x="1547">1</tspan><tspan x="1623">0</tspan><tspan x="1698">0</tspan><tspan x="1774">1</tspan><tspan x="1850">0</tspan></text>
          <text y="371"><tspan x="1547">1</tspan><tspan x="1623">0</tspan><tspan x="1698">1</tspan><tspan x="1774">0</tspan><tspan x="1850">1</tspan></text>
          <text y="401"><tspan x="1547">1</tspan><tspan x="1623">1</tspan><tspan x="1698">0</tspan><tspan x="1774">0</tspan><tspan x="1850">1</tspan></text>
          <text y="431"><tspan x="1547">1</tspan><tspan x="1623">1</tspan><tspan x="1698">1</tspan><tspan x="1774">1</tspan><tspan x="1850">1</tspan></text>
        </g>

        <g class="pop"><rect x="464" y="712" width="957" height="300" fill="#fff" stroke="#b8b8b8"/></g>
        <rect x="465" y="713" width="955" height="40" fill="#f3f3f3"/><path d="M465 753H1420" stroke="#7a8a99" stroke-width="2"/>
        <use href="#i-digital" x="483" y="725" width="16" height="16"/><text x="509" y="738" class="cap">All possible solutions</text><path d="M1399 726l10 10M1409 726l-10 10" stroke="#888" stroke-width="2"/>
        <g class="eq">
          <text y="793"><tspan x="472">SUM</tspan><tspan x="526" dy="6" class="sub">OUT</tspan><tspan x="577" dy="-6">=</tspan><tspan x="604">(A</tspan><tspan x="643">∧</tspan><tspan x="676">B</tspan><tspan x="706">∧</tspan><tspan x="738">Ci)</tspan><tspan x="783">∨</tspan><tspan x="816">(A</tspan><tspan x="852">∧</tspan><tspan x="888">B</tspan><tspan x="916">∧</tspan><tspan x="949">Ci)</tspan><tspan x="996">∨</tspan><tspan x="1026">(A</tspan><tspan x="1063">∧</tspan><tspan x="1100">B</tspan><tspan x="1128">∧</tspan><tspan x="1161">Ci)</tspan><tspan x="1208">∨</tspan><tspan x="1240">(A</tspan><tspan x="1276">∧</tspan><tspan x="1312">B</tspan><tspan x="1342">∧</tspan><tspan x="1372">Ci)</tspan></text>
          <text y="841"><tspan x="472">CARRY</tspan><tspan x="558" dy="6" class="sub">OUT</tspan><tspan x="609" dy="-6">=</tspan><tspan x="637">(A</tspan><tspan x="674">∧</tspan><tspan x="706">Ci)</tspan><tspan x="752">∨</tspan><tspan x="784">(A</tspan><tspan x="820">∧</tspan><tspan x="852">B)</tspan><tspan x="896">∨</tspan><tspan x="927">(B</tspan><tspan x="964">∧</tspan><tspan x="995">Ci)</tspan></text>
          <path d="M613 768h14M677 768h14M826 768h14M950 768h22M1101 768h14M1162 768h22" stroke="#333" stroke-width="2"/>
        </g>
      </svg>
    </div>
  </div>
</section>

<svg class="cursor" viewBox="0 0 16 26"><path d="M1 1v20l5-4.500 3.500 8 3-1.300L9 15.500h6z" fill="#fff" stroke="#111" stroke-width="1.400"/></svg>
</body>
</html>
```
FILE: styles.css
```
* { box-sizing: border-box; }
html, body { height: 100%; }
body {
  margin: 0;
  position: relative;
  overflow: hidden;
  display: flex;
  flex-direction: column;
  background: #fff;
  color: #333;
  font: 14px "Liberation Sans", Arial, sans-serif;
}
button { margin: 0; padding: 0; border: 0; background: none; color: inherit; font: inherit; }
.sprite { position: absolute; }

/* application header */
.app-head {
  flex: none;
  padding-bottom: 2px;
  background: linear-gradient(#fff 10px, #f0f0f0 50px, #d7d9d9);
  border-bottom: 1px solid #ccc;
  box-shadow: inset 0 -1px #eee;
}
.menubar { display: flex; gap: 15px; height: 25px; padding-left: 5px; align-items: center; font-weight: bold; }
.toolbar { display: flex; align-items: center; gap: 11px; height: 56px; padding-left: 3px; }
.grip {
  width: 9px; height: 51px; margin-right: -7px;
  background: radial-gradient(circle at 1px 1px, #aab3bc 1px, transparent 1px) 0 0 / 4px 4px, radial-gradient(circle at 3px 3px, #aab3bc 1px, transparent 1px) 0 0 / 4px 4px;
}
.tools { display: flex; align-items: center; gap: 1px; }
.tool {
  width: 46px; height: 46px;
  display: flex; align-items: center; justify-content: center;
  background: #eee;
  border: 1px solid #959595;
  box-shadow: inset 1px 1px #fff, 1px 1px #fff;
}
.tool svg { width: 32px; height: 32px; }
.tool.off { border-color: #ccc; box-shadow: none; background: #ececec; }
.tool.off svg { opacity: .8; }
.tool.hover { background: linear-gradient(#dbe7f3, #fff 45%, #b8cfe5); }
.tool.raised { border-color: #fff #777 #777 #fff; border-width: 2px; box-shadow: none; }
.part {
  display: flex; align-items: center; justify-content: center;
  background: #eee; border: 1px solid #959595;
  box-shadow: inset 1px 1px #fff, 1px 1px #fff;
}
.part svg { width: 100%; height: 100%; }
.pin { width: 35px; height: 33px; }
.gate { width: 67px; height: 52px; }
.text { width: 43px; height: 30px; font: 13px "Noto Sans", sans-serif; }

/* drawing area */
.work { flex: 1; min-height: 0; display: flex; }
.circuit { flex: 1; min-width: 0; height: 100%; }
.label { font-size: 17px; font-style: italic; fill: #000; }
.note { font-size: 17px; fill: #000; text-anchor: end; }
.vscroll {
  width: 21px; flex: none; display: flex; flex-direction: column;
  border: 1px solid #7a8a99; background: #eee;
}
.vscroll button { height: 19px; display: grid; place-items: center; border-bottom: 1px solid #7a8a99; box-shadow: inset 1px 1px #fff; }
.vscroll button:last-child { border: 0; border-top: 1px solid #7a8a99; }
.vscroll svg { width: 10px; height: 5px; fill: #333; }
.track { flex: 1; display: flex; flex-direction: column; padding: 87px 0 83px; border-left: 1px solid #b8cfe5; }
.thumb {
  flex: 1; display: grid; align-items: center; padding: 0 3px;
  border: 1px solid #6382bf; border-right: 0; border-left: 0;
  background: linear-gradient(90deg, #c9dcf0, #fff 35%, #fff 45%, #b0c9e6);
}
.thumb i { height: 5px; border: solid #6382bf; border-width: 1px 0; }
.status { flex: none; height: 20px; padding-left: 10px; line-height: 22px; font-weight: bold; background: #eee; }

/* tool windows */
.window {
  position: absolute;
  display: flex; flex-direction: column;
  border: 1px solid #b5b5b5; border-radius: 9px;
  background: #f3f3f3; overflow: hidden;
  box-shadow: 0 12px 28px rgba(0,0,0,.28), 0 0 14px rgba(0,0,0,.12);
}
.table-win { left: 207px; top: 103px; width: 455px; height: 493px; }
.solutions { left: 109px; top: 617px; width: 754px; bottom: 0; border-radius: 9px 9px 0 0; border-bottom: 0; }
.caption {
  flex: none; display: flex; align-items: center; height: 37px; padding: 0 14px 0 10px;
  font: 14px "Open Sans", "Noto Sans", sans-serif; color: #8c8c8c;
}
.caption > svg { width: 16px; height: 16px; margin-right: 9px; }
.caption button { margin-left: auto; width: 13px; height: 13px; color: #777; }
.caption button svg { display: block; width: 13px; height: 13px; }
.small { background: linear-gradient(#fff, #e4e4e4); height: 27px; border-bottom: 1px solid #ccc; }
.truth-box { flex: 1; background: #eee; border: 1px solid #7a8a99; border-right: 0; }
.truth { width: 270px; table-layout: fixed; border-collapse: separate; border-spacing: 0; text-align: center; font-weight: bold; }
.truth th { height: 24px; padding: 0; background: #eee; border: 1px solid #777; border-width: 0 1px 1px 0; box-shadow: inset 1px 2px #fff; }
.truth td { height: 30px; padding: 0 3px 0 0; background: #e6e6e6; border: 1px solid #7a8a99; border-width: 0 1px 1px 0; font-size: 23px; line-height: 29px; }
.formulas { flex: 1; background: #fff; border: 1px solid #7a8a99; border-width: 1px 1px 0 1px; padding: 8px 5px; font-size: 24px; color: #333; white-space: nowrap; -webkit-text-stroke: .035em #333; }
.formulas p { margin: 0; height: 48px; line-height: 48px; display: flex; }
.formulas sub { margin-left: 1px; font-size: 18px; font-weight: bold; line-height: 60px; -webkit-text-stroke: 0; }
.formulas b { margin: 0 12px 0 13px; font-weight: normal; }
.formulas i { font-style: normal; line-height: 27px; height: 28px; margin-top: 9px; border-top: 2px solid #333; }
.formulas em { width: 20px; margin: 0 14px; font: 24px/50px "DejaVu Sans", sans-serif; -webkit-text-stroke: 0; }

/* ShareX */
.sharex {
  position: absolute; left: 397px; right: 398px; top: 168px;
  border-radius: 9px; overflow: hidden;
  background: #272727; color: #f0f0f0;
  box-shadow: 0 36px 60px rgba(0,0,0,.42), 0 4px 24px rgba(0,0,0,.36), 0 0 1px 1px rgba(90,90,90,.6);
}
.titlebar { display: flex; align-items: center; height: 37px; padding: 0 1px 2px 9px; background: #1f1f1f; color: #7b7b7b; }
.logo { width: 20px; height: 20px; margin-right: 6px; }
.titlebar h1 { margin: 0 auto 0 0; font: 14px "Open Sans", "Noto Sans", sans-serif; }
.titlebar button { width: 59px; height: 35px; display: grid; place-items: center; }
.titlebar button svg { width: 12px; height: 12px; fill: none; stroke: #a0a0a0; }
.panes { display: flex; }
.side { flex: none; width: 233px; padding: 5px 12px 5px 10px; display: flex; flex-direction: column; font: 16px "Open Sans", "Noto Sans", sans-serif; }
.side button { display: flex; align-items: center; height: 30px; text-align: left; white-space: nowrap; }
.side svg { width: 19px; height: 19px; margin-right: 5px; flex: none; }
.more::after { content: ""; margin: 0 1px 0 auto; border: 5px solid transparent; border-left-color: #f4f4f4; border-right: 0; }
.side hr { width: 100%; height: 1px; margin: 7px 0; border: 0; background: #191919; }
.list { flex: 1 1 335px; min-width: 0; overflow: hidden; display: flex; flex-direction: column; }
.list-view { flex: 1; overflow: hidden; }
.tasks { width: 378px; table-layout: fixed; border-collapse: collapse; white-space: nowrap; font-size: 13px; text-align: left; }
.tasks th { height: 24px; padding: 0 0 0 6px; font-weight: normal; font-size: 14px; border-right: 1px solid #1c1c1c; }
.tasks th:first-child { width: 199px; padding-left: 5px; }
.tasks th:nth-child(2) { width: 80px; }
.tasks td { height: 20px; padding: 0 0 0 7px; overflow: hidden; }
.tasks td:first-child { display: flex; align-items: center; padding-left: 5px; }
.tasks td svg { width: 14px; height: 14px; margin-right: 1px; flex: none; }
.tasks td span { flex: 1; padding-left: 2px; line-height: 20px; }
.sel span, .sel td:not(:first-child) { background: #f0f0f0; color: #111; }
.hscroll { flex: none; height: 21px; padding: 8px 0 0 21px; background: #f0f0f0; }
.hthumb { width: 110px; height: 6px; background: #858585; }
.splitter { flex: none; width: 8px; border: solid #1c1c1c; border-width: 0 1px; }
.preview {
  flex: 1 1 549px; min-width: 0; display: flex; align-items: center;
  background: repeating-conic-gradient(#272727 0 25%, #2f2f2f 0 50%) 0 0 / 30px 30px;
}
.shot { width: 100%; }
.shot text { fill: #333; }
.shot .mb, .shot .b14 { font-weight: bold; font-size: 14px; }
.shot .mid { text-anchor: middle; }
.shot .num { font-weight: bold; font-size: 23px; }
.shot .big { font-size: 26px; }
.shot .big text { fill: #111; }
.shot .it { font-style: italic; }
.shot .cap { font: 14px "Open Sans", sans-serif; fill: #888; }
.shot .eq { font-size: 24px; }
.shot .eq text { stroke: #333; stroke-width: 1px; }
.shot .sub { font-size: 18px; font-weight: bold; }
.pop { filter: drop-shadow(0 10px 20px rgba(0,0,0,.35)); }

.cursor { position: absolute; left: 467px; top: 75px; width: 16px; height: 26px; }
```
